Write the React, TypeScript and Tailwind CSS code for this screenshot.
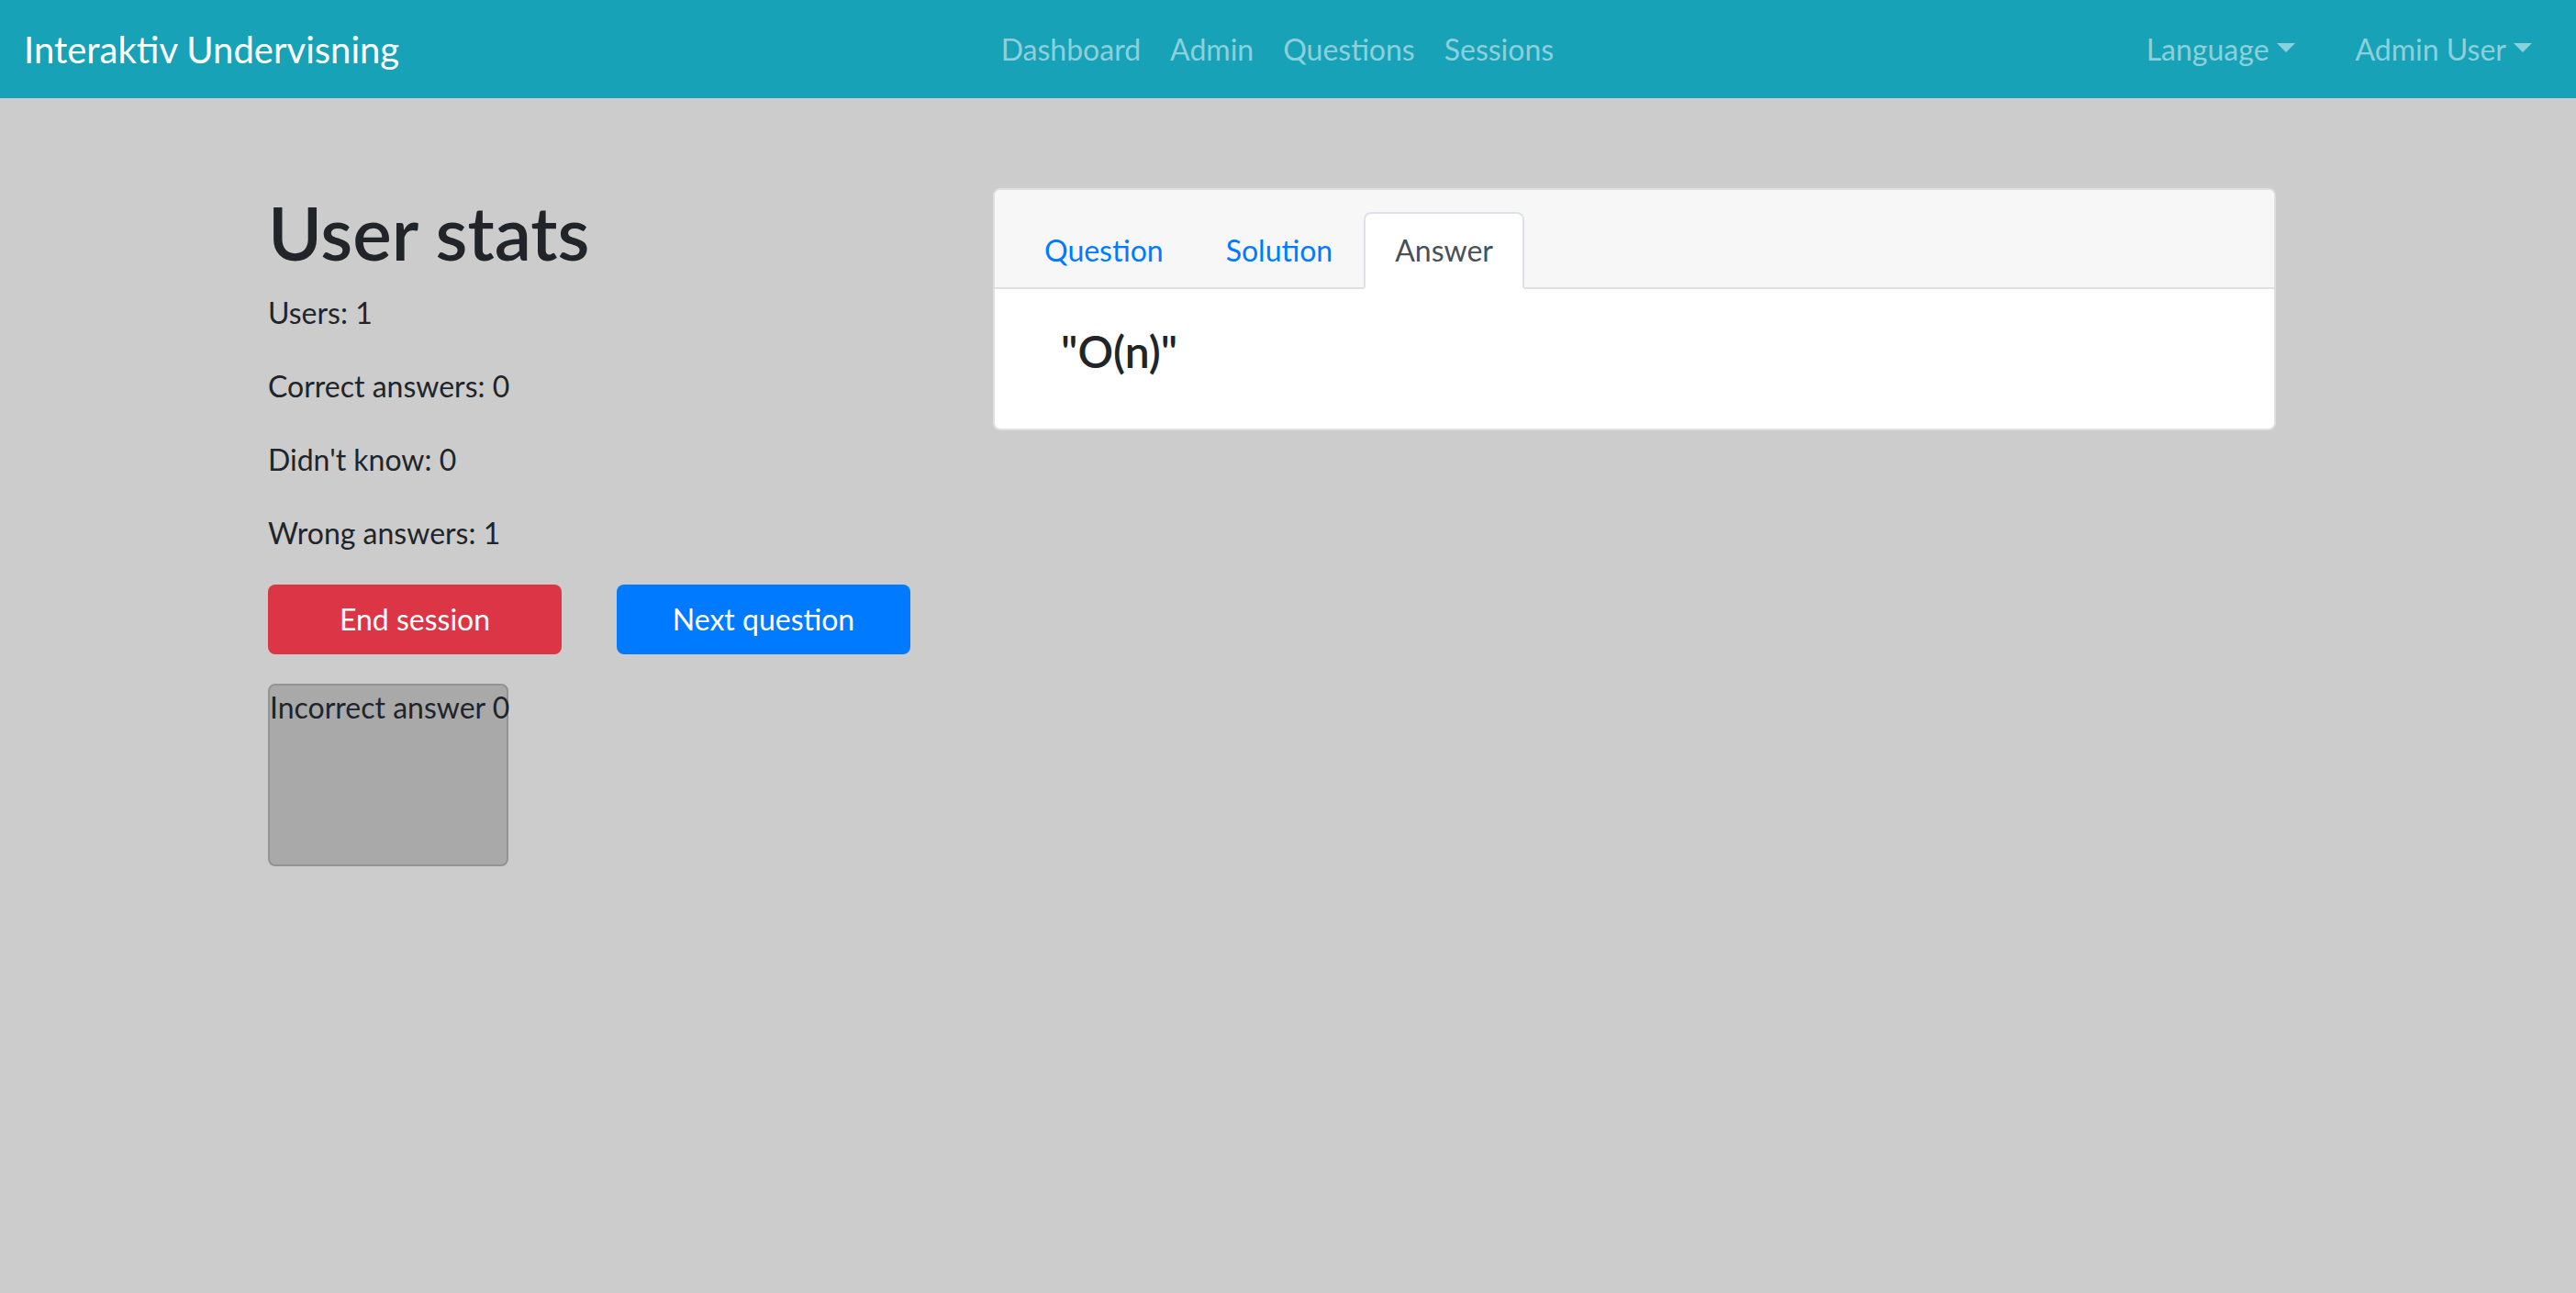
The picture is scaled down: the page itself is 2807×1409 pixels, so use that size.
import React from "react";

const Caret = () => (
  <span className="inline-block w-0 h-0 ml-[8px] align-[0.255em] border-t-[10px] border-t-current border-x-[10px] border-x-transparent"></span>
);

const Navbar = () => {
  return (
    <nav className="h-[107px] bg-[#17a2b8] flex items-center pl-[26px] pr-[32px]">
      <a className="text-[40px] leading-[60px] text-white mr-[16px] whitespace-nowrap">Interaktiv Undervisning</a>
      <ul className="flex mx-auto pl-[10px]">
        {["Dashboard", "Admin", "Questions", "Sessions"].map((item) => (
          <li key={item} className="px-[16px] text-[32px] leading-[48px] text-white/50">
            {item}
          </li>
        ))}
      </ul>
      <ul className="flex gap-[34px]">
        {["Language", "Admin User"].map((item) => (
          <li key={item} className="px-[16px] text-[32px] leading-[48px] text-white/50 whitespace-nowrap">
            {item}
            <Caret />
          </li>
        ))}
      </ul>
    </nav>
  );
};

const UserStats = () => {
  const stats = [
    { label: "Users", value: 1 },
    { label: "Correct answers", value: 0 },
    { label: "Didn't know", value: 0 },
    { label: "Wrong answers", value: 1 },
  ];

  return (
    <section className="w-[790px] shrink-0">
      <h1 className="text-[80px] leading-[96px] font-semibold mb-[16px]">User stats</h1>
      {stats.map((s) => (
        <p key={s.label} className="text-[32px] leading-[48px] mb-[32px]">
          {s.label}: {s.value}
        </p>
      ))}
      <div className="flex gap-[60px]">
        <button className="w-[320px] h-[76px] rounded-[8px] bg-[#dc3545] text-white text-[32px] leading-[48px]">
          End session
        </button>
        <button className="w-[320px] h-[76px] rounded-[8px] bg-[#007bff] text-white text-[32px] leading-[48px]">
          Next question
        </button>
      </div>
      <div className="mt-[32px] w-[262px] h-[199px] border-2 border-[#939393] bg-[#a9a9a9] rounded-[8px] text-[32px] leading-[48px] whitespace-nowrap">
        Incorrect answer 0
      </div>
    </section>
  );
};

const AnswerCard = () => {
  const tabs = ["Question", "Solution", "Answer"];
  const active = "Answer";

  return (
    <div className="w-[1398px] shrink-0 bg-white border-2 border-[#dfdfdf] rounded-[8px]">
      <div className="bg-[#f7f7f7] border-b-2 border-[#dfdfdf] px-[40px] pt-[24px] rounded-t-[6px]">
        <ul className="flex -mx-[20px] -mb-[2px]">
          {tabs.map((tab) => (
            <li
              key={tab}
              className={
                tab === active
                  ? "px-[32px] py-[16px] border-2 border-[#dee2e6] border-b-white bg-white rounded-t-[8px] text-[32px] leading-[48px] text-[#495057]"
                  : "px-[32px] py-[16px] border-2 border-transparent rounded-t-[8px] text-[32px] leading-[48px] text-[#007bff]"
              }
            >
              {tab}
            </li>
          ))}
        </ul>
      </div>
      <div className="pt-[40px] pb-[40px] pl-[72px] pr-[40px]">
        <h4 className="text-[48px] leading-[56px] font-semibold mb-[16px]">"O(n)"</h4>
      </div>
    </div>
  );
};

export default function App() {
  return (
    <div className="min-h-screen bg-[#cccccc] text-[#212529] font-['Lato',sans-serif]">
      <Navbar />
      <main className="flex items-start pt-[98px] pl-[292px]">
        <UserStats />
        <AnswerCard />
      </main>
    </div>
  );
}
